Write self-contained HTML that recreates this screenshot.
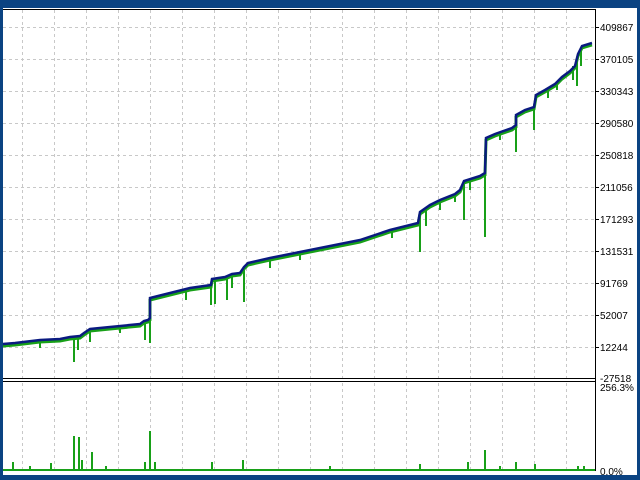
<!DOCTYPE html>
<html><head><meta charset="utf-8"><style>
html,body{margin:0;padding:0;width:640px;height:480px;overflow:hidden;background:#0b4382}
svg{display:block}
text{font-family:"Liberation Sans",sans-serif;font-size:10px;fill:#000}
</style></head><body>
<svg width="640" height="480" viewBox="0 0 640 480">
<rect x="0" y="0" width="640" height="480" fill="#0b4382"/>
<rect x="3" y="8" width="634" height="467" fill="#fff"/>
<g stroke="#c8c8c8" stroke-dasharray="3,3" stroke-width="1">
<path d="M22.5 10V378M54.5 10V378M86.5 10V378M118.5 10V378M150.5 10V378M182.5 10V378M214.5 10V378M246.5 10V378M278.5 10V378M310.5 10V378M342.5 10V378M374.5 10V378M406.5 10V378M438.5 10V378M470.5 10V378M502.5 10V378M534.5 10V378M566.5 10V378"/>
<path d="M22.5 383V470M54.5 383V470M86.5 383V470M118.5 383V470M150.5 383V470M182.5 383V470M214.5 383V470M246.5 383V470M278.5 383V470M310.5 383V470M342.5 383V470M374.5 383V470M406.5 383V470M438.5 383V470M470.5 383V470M502.5 383V470M534.5 383V470M566.5 383V470"/>
<path d="M3 27.5H595M3 59.5H595M3 91.5H595M3 123.5H595M3 155.5H595M3 187.5H595M3 219.5H595M3 251.5H595M3 283.5H595M3 315.5H595M3 347.5H595"/>
</g>
<g stroke="#000" stroke-width="1" fill="none">
<path d="M3 9.5H595.5V471M3 378.5H595M3 381.5H595M3 470.5H595"/>
<path d="M595 27.5h4M595 59.5h4M595 91.5h4M595 123.5h4M595 155.5h4M595 187.5h4M595 219.5h4M595 251.5h4M595 283.5h4M595 315.5h4M595 347.5h4"/>
</g>
<g stroke="#18a018" stroke-width="2" fill="none">
<path d="M74 337V362M78 336V350M90 330V342M145 322V340M150 318V343M211 285V305M215 279V304M227 276V300M186 289V300M244 267V302M420 214V252M426 210V226M464 182V220M485 174V237M516 116V152M534 108V130M557 84V90M577 60V86M581 50V66M455 195V202M440 201V210M270 258V268M500 132V140M573 66V80M40 340V348M120 327V333M232 276V288M300 254V260M392 232V238M470 180V190M548 90V98"/>
<path d="M3 470H595" stroke-width="2"/>
<path d="M13 470V462M30 470V466M51 470V463M74 470V436M79 470V437M82 470V460M92 470V452M106 470V466M145 470V462M150 470V431M155 470V462M212 470V462M243 470V460M330 470V466M420 470V464M468 470V462M485 470V450M500 470V466M516 470V462M535 470V464M578 470V466M584 470V466"/>
</g>
<path d="M3 346L15 345L40 342L60 341L70 339L80 338L84 335L90 331L110 329L140 326L144 323L148 322L150 320L150 300L162 297L170 295L190 290L211 287L212 281L225 279L232 276L240 275L244 269L248 265L270 260L300 254L330 248L360 242L378 236L390 232L410 227L418 225L420 214L430 207L440 202L455 196L460 192L464 183L480 178L485 175L486 140L495 136L512 130L516 127L516 117L525 112L534 109L536 97L545 92L555 86L562 79L570 73L575 68L578 56L582 48L592 45" fill="none" stroke="#18a018" stroke-width="3"/>
<path d="M3 344L15 343L40 340L60 339L70 337L80 336L84 333L90 329L110 327L140 324L144 321L148 320L150 318L150 298L162 295L170 293L190 288L211 285L212 279L225 277L232 274L240 273L244 267L248 263L270 258L300 252L330 246L360 240L378 234L390 230L410 225L418 223L420 212L430 205L440 200L455 194L460 190L464 181L480 176L485 173L486 138L495 134L512 128L516 125L516 115L525 110L534 107L536 95L545 90L555 84L562 77L570 71L575 66L578 54L582 46L592 43" fill="none" stroke="#0a1a80" stroke-width="2.5"/>
<g>
<text x="600" y="31">409867</text><text x="600" y="63">370105</text><text x="600" y="95">330343</text>
<text x="600" y="127">290580</text><text x="600" y="159">250818</text><text x="600" y="191">211056</text>
<text x="600" y="223">171293</text><text x="600" y="255">131531</text><text x="600" y="287">91769</text>
<text x="600" y="319">52007</text><text x="600" y="351">12244</text><text x="600" y="382">-27518</text>
<text x="600" y="391">256.3%</text><text x="600" y="475">0.0%</text>
</g>
</svg>
</body></html>
